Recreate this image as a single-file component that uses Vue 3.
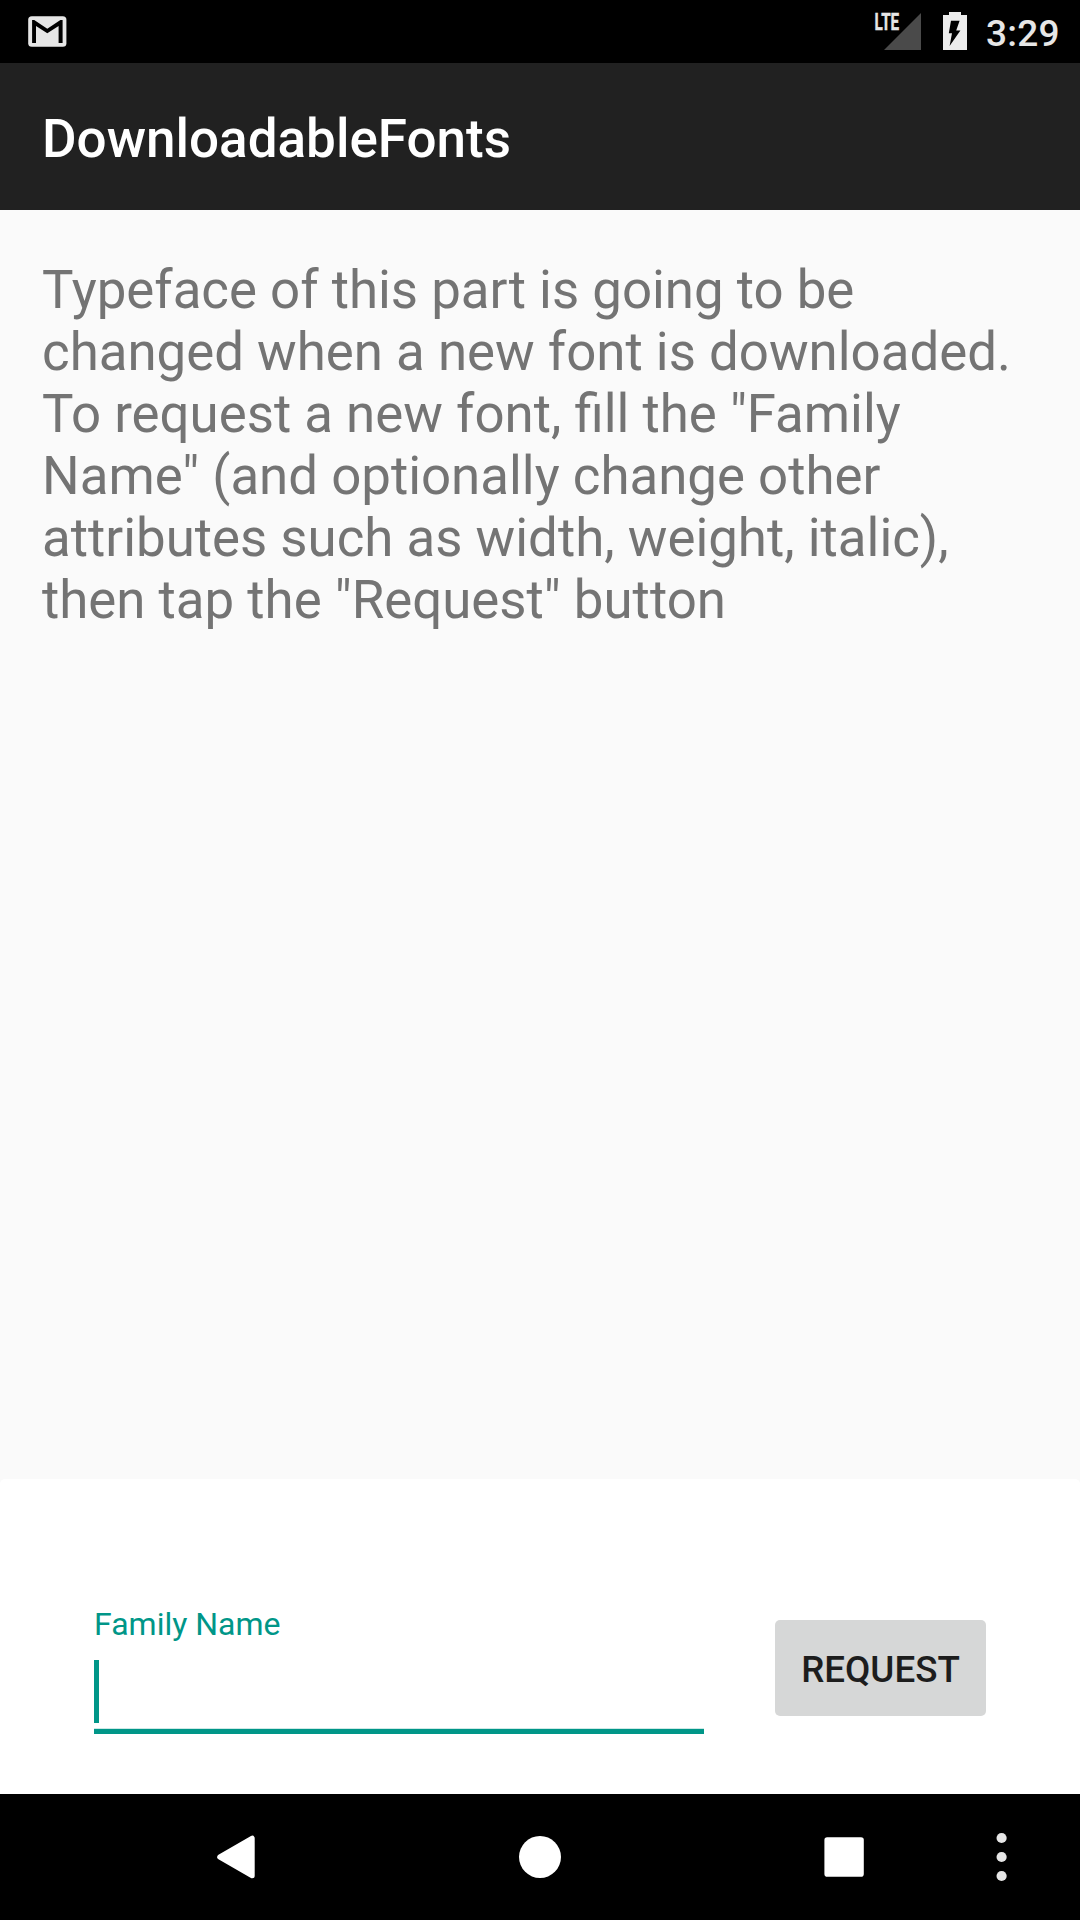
<script setup>
import { ref } from 'vue'

const familyName = ref('')
const lines = [
  'Typeface of this part is going to be',
  'changed when a new font is downloaded.',
  'To request a new font, fill the "Family',
  'Name" (and optionally change other',
  'attributes such as width, weight, italic),',
  'then tap the "Request" button',
]
</script>

<template>
  <div class="screen">
    <header class="status">
      <svg class="mail" width="40" height="32" viewBox="0 0 40 32">
        <rect x="0.2" y="0.2" width="38.2" height="30.6" rx="3.6" fill="#e6e6e6" />
        <path d="M4.1 27V4.1H6.2L19.3 12.7L32.4 4.1H34.6V27H30.6V9.9L19.3 17.2L8 9.9V27Z" fill="#000" />
      </svg>
      <div class="indicators">
        <svg class="signal" width="48" height="50" viewBox="0 -12 48 50">
          <path d="M10 38L47 1V38Z" fill="#4a4a4a" />
          <text x="0.6" y="18" textLength="24.6" lengthAdjust="spacingAndGlyphs">LTE</text>
        </svg>
        <svg class="battery" width="24" height="38" viewBox="0 0 24 38">
          <path d="M6 0H18V3H24V38H0V3H6Z" fill="#ececec" />
          <path d="M8 8.8H16.6L13.2 18.5H17.4L6.6 34L9 21.3H5.8Z" fill="#000" />
        </svg>
        <span class="clock">3:29</span>
      </div>
    </header>

    <div class="appbar"><h1>DownloadableFonts</h1></div>

    <main class="content">
      <p><span v-for="line in lines" :key="line" class="line">{{ line }}</span></p>
    </main>

    <form class="panel" @submit.prevent>
      <label class="field">
        <span class="caption">Family Name</span>
        <span class="entry"><span class="caret"></span>{{ familyName }}</span>
      </label>
      <button class="request">REQUEST</button>
    </form>

    <nav class="navbar">
      <svg width="1080" height="126" viewBox="0 0 1080 126">
        <path d="M219.7 63L252.2 44.2V81.8Z" fill="#fff" stroke="#fff" stroke-width="5" stroke-linejoin="round" />
        <circle cx="540" cy="63" r="21" fill="#fff" />
        <rect x="824.4" y="43.3" width="39.4" height="39.4" rx="2.8" fill="#fff" />
        <g fill="#e6e6e6">
          <circle cx="1001.6" cy="44" r="5.1" />
          <circle cx="1001.6" cy="63" r="5.1" />
          <circle cx="1001.6" cy="82" r="5.1" />
        </g>
      </svg>
    </nav>
  </div>
</template>

<style>
body {
  margin: 0;
}
</style>

<style scoped>
.screen {
  width: 1080px;
  height: 1920px;
  display: flex;
  flex-direction: column;
  background: #fafafa;
  font-family: Roboto, sans-serif;
  overflow: hidden;
}
.status {
  height: 63px;
  flex: none;
  display: flex;
  justify-content: space-between;
  align-items: flex-start;
  background: #000;
}
.mail {
  margin: 16px 0 0 28px;
}
.indicators {
  display: flex;
  align-items: flex-start;
  margin-right: 20px;
}
.signal {
  margin: 0 21px 0 0;
}
.signal text {
  font: 700 23px Roboto, sans-serif;
  fill: #e6e6e6;
  stroke: #e6e6e6;
  stroke-width: 0.4px;
}
.battery {
  margin: 12px 19px 0 0;
}
.clock {
  width: 74px;
  margin-top: 12px;
  font-size: 37px;
  line-height: 43px;
  font-weight: 500;
  letter-spacing: 0.2px;
  color: #e6e6e6;
}
.appbar {
  height: 147px;
  flex: none;
  display: flex;
  align-items: flex-start;
  padding: 45px 0 0 42px;
  box-sizing: border-box;
  background: #212121;
}
h1 {
  margin: 0;
  color: #fff;
  font-size: 53px;
  line-height: 62px;
  font-weight: 500;
}
.content {
  flex: 1;
  padding: 49px 42px 0;
}
p {
  margin: 0;
  color: #747474;
  font-size: 52.8px;
  line-height: 62px;
}
.line {
  display: block;
  white-space: nowrap;
}
.panel {
  height: 315px;
  flex: none;
  display: flex;
  align-items: flex-start;
  justify-content: space-between;
  padding: 0 94px;
  box-sizing: border-box;
  border-radius: 5px 5px 0 0;
  background: #fff;
}
.field {
  width: 610px;
  padding-top: 126px;
  display: flex;
  flex-direction: column;
}
.caption {
  color: #009688;
  font-size: 32px;
  line-height: 38px;
}
.entry {
  height: 69px;
  margin-top: 17px;
  border-bottom: 5px solid #009688;
  box-shadow: inset 0 -1px #cce9e6;
}
.caret {
  display: block;
  width: 5px;
  height: 63px;
  background: #009688;
}
.request {
  width: 211px;
  height: 96px;
  margin-top: 141px;
  padding: 3px 0 0;
  border: 0;
  border-radius: 5px;
  background: #d6d7d7;
  color: #1d1d1d;
  font: 500 36.75px/44px Roboto, sans-serif;
}
.navbar {
  height: 126px;
  flex: none;
  background: #000;
}
.navbar svg {
  display: block;
}
</style>
